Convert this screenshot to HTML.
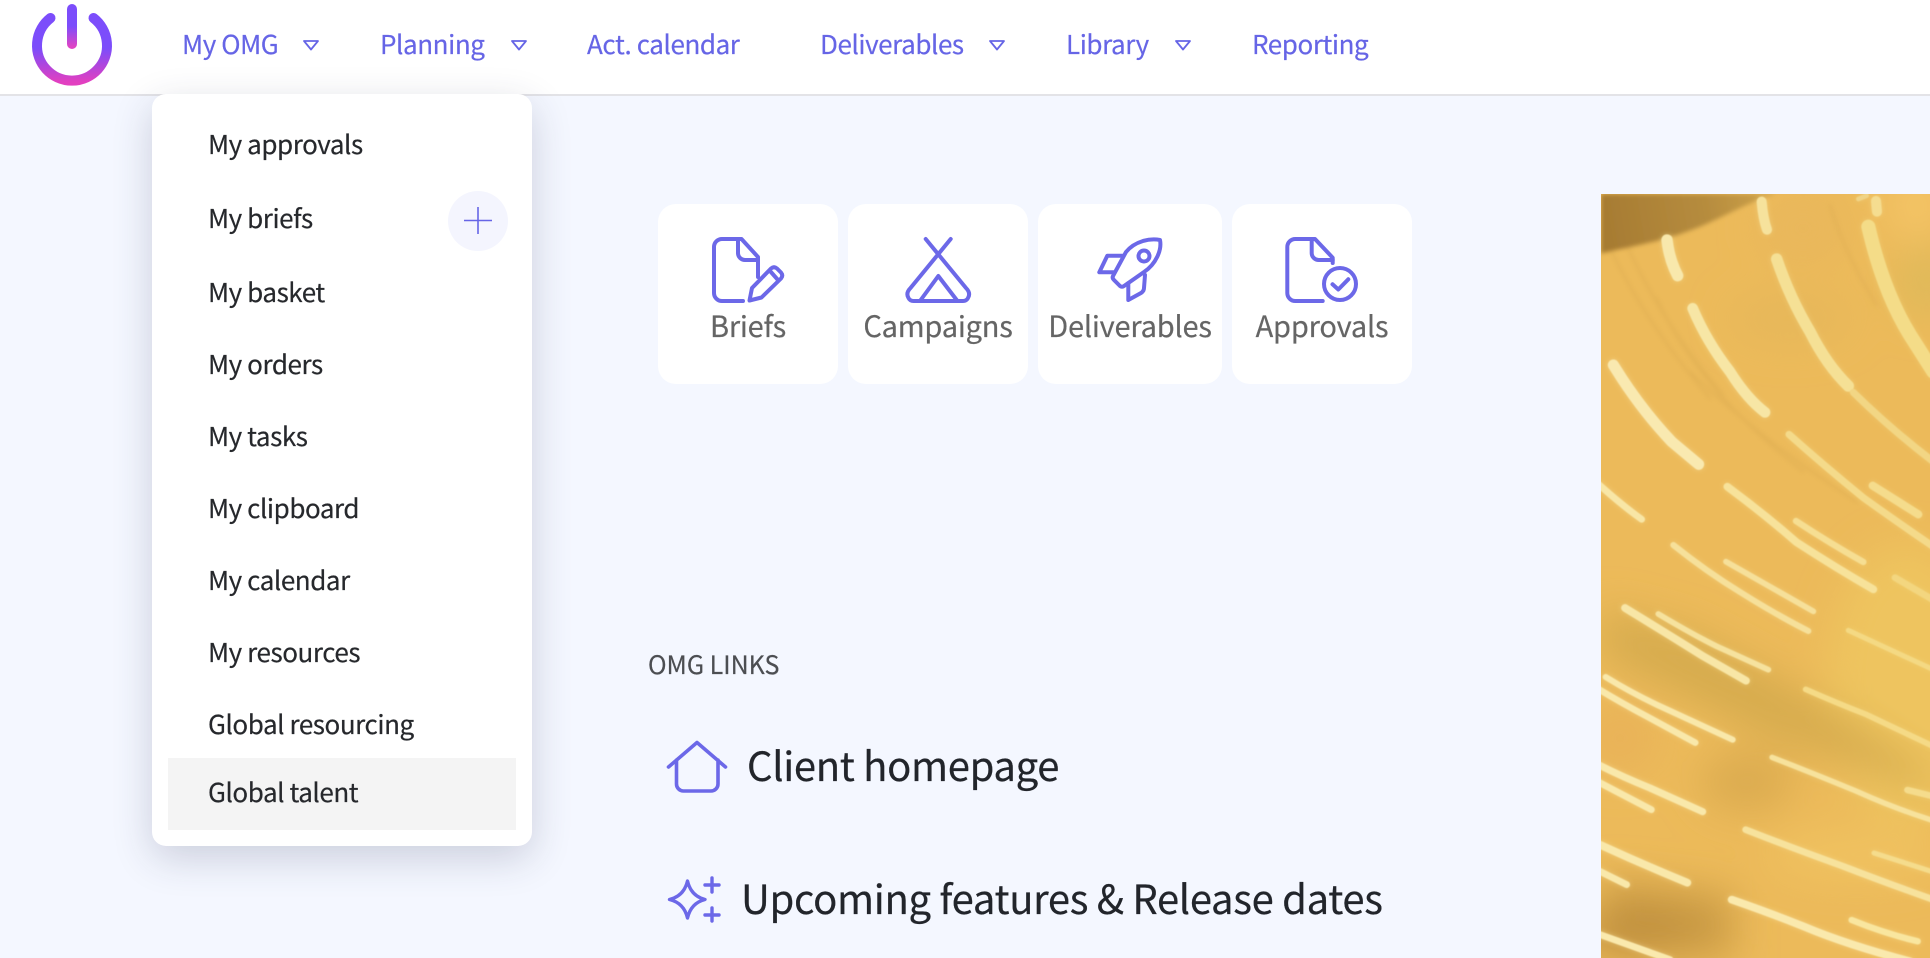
<!DOCTYPE html>
<html lang="en"><head><meta charset="utf-8"><title>OMG</title>
<style>
html,body{margin:0;padding:0;width:1930px;height:958px;overflow:hidden;background:#f4f7ff}
body{position:relative;font-family:"Noto Sans CJK JP","Noto Sans CJK SC","Liberation Sans",sans-serif}
.t{position:absolute;white-space:nowrap;line-height:40px;height:40px;-webkit-text-stroke:.2px currentColor}
.n{font-size:26px;letter-spacing:-.42px;color:#6665e6;top:24px}
.m{font-size:26px;letter-spacing:-.44px;color:#26282c;left:208px}
.c{font-size:29px;letter-spacing:-.2px;color:#656565;top:305px;text-align:center;transform:translateX(-50%)}
#hdr{position:absolute;left:0;top:0;width:1930px;height:94px;background:#fff;border-bottom:2px solid #e3e3e7}
#menu{position:absolute;left:152px;top:94px;width:380px;height:752px;background:#fff;border-radius:14px;box-shadow:0 12px 40px rgba(40,44,80,.2)}
#hl{position:absolute;left:168px;top:758px;width:348px;height:72px;background:#f4f4f4}
#plus{position:absolute;left:448px;top:191px;width:60px;height:60px;border-radius:50%;background:#f4f5fe}
.card{position:absolute;top:204px;height:180px;background:#fff;border-radius:18px}
svg{position:absolute;left:0;top:0}
#img{position:absolute;left:1601px;top:194px;width:329px;height:764px;overflow:hidden}
</style></head>
<body>
<div id="hdr"></div>

<div class="t n" style="left:182px">My OMG</div>
<div class="t n" style="left:380px">Planning</div>
<div class="t n" style="left:587px">Act. calendar</div>
<div class="t n" style="left:820px">Deliverables</div>
<div class="t n" style="left:1066px">Library</div>
<div class="t n" style="left:1252px">Reporting</div>

<div class="card" style="left:658px;width:180px"></div>
<div class="card" style="left:848px;width:180px"></div>
<div class="card" style="left:1038px;width:184px"></div>
<div class="card" style="left:1232px;width:180px"></div>
<div class="t c" style="left:748px">Briefs</div>
<div class="t c" style="left:938px">Campaigns</div>
<div class="t c" style="left:1130px">Deliverables</div>
<div class="t c" style="left:1322px">Approvals</div>

<div class="t" style="left:648px;top:644px;font-size:25px;color:#4c4e52">OMG LINKS</div>
<div class="t" style="left:747px;top:742px;font-size:40px;letter-spacing:-.33px;line-height:44px;height:44px;color:#22252b">Client homepage</div>
<div class="t" style="left:741px;top:875px;font-size:40px;letter-spacing:-.32px;line-height:44px;height:44px;color:#22252b">Upcoming features &amp; Release dates</div>

<div id="img">
<svg width="329" height="764" viewBox="33 27 987 2292" fill="none" stroke-linecap="round" stroke-linejoin="round">
<defs>
<linearGradient id="wedge" gradientUnits="userSpaceOnUse" x1="33" y1="120" x2="560" y2="30"><stop offset="0" stop-color="#a67b32"/><stop offset=".6" stop-color="#b68c3e"/><stop offset="1" stop-color="#cfa34a"/></linearGradient>
<filter id="b60" filterUnits="userSpaceOnUse" x="-300" y="-300" width="1700" height="3000"><feGaussianBlur stdDeviation="60"/></filter>
<filter id="b6" filterUnits="userSpaceOnUse" x="-100" y="-100" width="1300" height="2600"><feGaussianBlur stdDeviation="6"/></filter>
<filter id="st" filterUnits="userSpaceOnUse" x="-100" y="-100" width="1300" height="2600">
<feGaussianBlur in="SourceGraphic" stdDeviation="8" result="h"/>
<feComponentTransfer in="h" result="h2"><feFuncA type="linear" slope=".45"/></feComponentTransfer>
<feGaussianBlur in="SourceGraphic" stdDeviation="1.2" result="c"/>
<feMerge><feMergeNode in="h2"/><feMergeNode in="c"/></feMerge>
</filter>
</defs>
<rect x="33" y="27" width="987" height="2292" fill="#ecba5a"/>
<!-- tone blobs -->
<g filter="url(#b60)" stroke="none">
<ellipse cx="980" cy="60" rx="90" ry="110" fill="#f4c466"/>
<ellipse cx="1010" cy="290" rx="90" ry="110" fill="#dfb95a"/>
<ellipse cx="640" cy="130" rx="130" ry="110" fill="#e9b75c"/>
<ellipse cx="600" cy="400" rx="180" ry="70" fill="#e6b75a"/>
<ellipse cx="950" cy="1500" rx="240" ry="420" fill="#eec45e"/>
<path d="M33 1270 L300 1340 L760 1590 L1020 1760 L1020 1820 L500 1640 L33 1410Z" fill="#d6ab4e"/>
<ellipse cx="90" cy="1660" rx="110" ry="110" fill="#e9b258"/>
<ellipse cx="470" cy="1790" rx="140" ry="90" fill="#dbab50"/>
<ellipse cx="800" cy="2010" rx="260" ry="70" fill="#f0c260"/>
<path d="M33 2080 L430 2130 L430 2319 L33 2319Z" fill="#cb9b45"/>
<ellipse cx="130" cy="2240" rx="170" ry="60" fill="#bf8f3e"/>
</g>
<!-- fine dark motion lines -->
<g filter="url(#b6)" stroke="#c89a45" stroke-width="8" opacity=".22">
<path d="M60 190 Q170 420 360 640"/><path d="M110 180 Q220 420 400 630"/>
<path d="M200 340 Q330 620 640 860"/><path d="M300 560 Q520 770 800 950"/>
<path d="M720 60 Q760 200 860 360"/>
</g>
<!-- dark wedge -->
<path d="M33 27 H560 C470 50 380 110 290 140 C210 170 120 185 33 205Z" fill="url(#wedge)" filter="url(#b6)"/>
<!-- light streaks -->
<g stroke="#f7e4a0" filter="url(#st)">
<path stroke-width="30" stroke="#f6e29c" d="M515 50 Q519 100 531 134"/>
<path stroke-width="34" stroke="#f8e8ac" d="M231 165 Q238 225 263 272"/>
<path stroke-width="32" stroke="#f7e6a5" d="M308 370 Q350 470 420 560 Q470 640 525 682"/>
<path stroke-width="34" stroke="#f5e095" d="M560 222 Q600 340 660 440 Q710 540 775 603"/>
<path stroke-width="42" stroke="#f4dc88" d="M835 125 Q880 320 960 450 L1030 560"/>
<path stroke-width="33" stroke="#f9e9b0" d="M70 540 Q150 670 245 770 L326 838"/>
<path stroke-width="21" stroke="#f2d684" d="M790 622 Q900 730 1030 830"/>
<path stroke-width="21" stroke="#f4da8a" d="M597 748 Q700 840 820 938 Q920 1010 1030 1085"/>
<path stroke-width="24" stroke="#f5dc8c" d="M848 902 L985 988"/>
<path stroke-width="23" stroke="#f7e29a" d="M412 905 Q520 985 620 1072 Q740 1150 850 1213"/>
<path stroke-width="19" stroke="#f6de92" d="M618 1008 Q720 1075 820 1131"/>
<path stroke-width="20" stroke="#f8e6a6" d="M25 897 Q95 960 155 1003"/>
<path stroke-width="18" stroke="#f6e09a" d="M250 1080 Q350 1160 450 1221 Q560 1290 655 1338"/>
<path stroke-width="17" stroke="#f6e09a" d="M408 1130 Q540 1205 670 1279"/>
<path stroke-width="20" stroke="#f3d67f" d="M915 1178 L1030 1245"/>
<path stroke-width="14" stroke="#f0d486" d="M805 42 L830 32"/>
<path stroke-width="30" stroke="#f5dd90" d="M858 48 L861 80"/>
</g>
<g stroke="#f7e4a0" filter="url(#st)" transform="translate(0 1299)">
<path stroke-width="23" stroke="#f8e6a6" d="M105 -30 Q220 40 340 115 L468 188"/>
<path stroke-width="17" stroke="#f6e29e" d="M205 -12 Q300 45 380 85 L535 155"/>
<path stroke-width="15" stroke="#f4d983" d="M775 37 Q900 95 1030 155"/>
<path stroke-width="18" stroke="#f9e8aa" d="M47 177 Q120 222 200 260 L428 365"/>
<path stroke-width="19" stroke="#f9e8aa" d="M25 213 Q100 258 170 295 L316 374"/>
<path stroke-width="17" stroke="#f5da86" d="M647 214 Q740 255 830 290 L1030 385"/>
<path stroke-width="21" stroke="#f9e8aa" d="M25 440 Q100 478 180 510 L338 581"/>
<path stroke-width="20" stroke="#f9e8aa" d="M25 492 L184 575"/>
<path stroke-width="16" stroke="#f7e29c" d="M546 418 Q680 470 800 520 Q910 570 1030 608"/>
<path stroke-width="19" stroke="#f5dc8c" d="M952 516 L1030 535"/>
<path stroke-width="20" stroke="#f7e29c" d="M467 635 Q620 695 760 745 Q890 795 1030 845"/>
<path stroke-width="15" stroke="#f5dc8c" d="M852 705 L1030 762"/>
<path stroke-width="23" stroke="#f9e8aa" d="M25 678 Q160 740 292 794"/>
<path stroke-width="20" stroke="#f9e8aa" d="M25 758 L110 800"/>
<path stroke-width="23" stroke="#fae9ad" d="M425 845 Q540 885 640 925 Q770 980 960 1030"/>
<path stroke-width="19" stroke="#f9e69f" d="M785 906 Q880 945 983 970"/>
<path stroke-width="20" stroke="#fae9ad" d="M25 948 L240 1025"/>
</g>
</svg>
</div>

<div id="menu"></div>
<div id="hl"></div>
<div id="plus"></div>
<div class="t m" style="top:124px">My approvals</div>
<div class="t m" style="top:198px">My briefs</div>
<div class="t m" style="top:272px">My basket</div>
<div class="t m" style="top:344px">My orders</div>
<div class="t m" style="top:416px">My tasks</div>
<div class="t m" style="top:488px">My clipboard</div>
<div class="t m" style="top:560px">My calendar</div>
<div class="t m" style="top:632px">My resources</div>
<div class="t m" style="top:704px">Global resourcing</div>
<div class="t m" style="top:772px">Global talent</div>

<svg width="1930" height="958" viewBox="0 0 1930 958" fill="none" stroke-linecap="round" stroke-linejoin="round" style="pointer-events:none">
<defs>
<linearGradient id="lg" gradientUnits="userSpaceOnUse" x1="72" y1="48" x2="72" y2="82"><stop offset="0" stop-color="#7c4dfb"/><stop offset="1" stop-color="#e23fc0"/></linearGradient>
<linearGradient id="lb" gradientUnits="userSpaceOnUse" x1="72" y1="26" x2="72" y2="47"><stop offset="0" stop-color="#7c4dfb"/><stop offset="1" stop-color="#e044c4"/></linearGradient>
</defs>
<!-- logo -->
<path d="M50.500 18 A35 35 0 1 0 93.500 18" stroke="url(#lg)" stroke-width="10"/>
<path d="M72 9 V44" stroke="url(#lb)" stroke-width="10"/>
<!-- carets -->
<g stroke="#6665e6" stroke-width="1.800">
<path d="M304 41 H318 L311 49.500Z"/>
<path d="M512 41 H526 L519 49.500Z"/>
<path d="M990 41 H1004 L997 49.500Z"/>
<path d="M1176 41 H1190 L1183 49.500Z"/>
<path d="M464 220.500 H492 M478 207 V234" stroke-width="1.600" stroke-linecap="butt"/>
</g>
<g stroke="#6c68e8" stroke-width="4">
<!-- briefs -->
<path d="M743 301 H722 a8 8 0 0 1 -8 -8 V247 a8 8 0 0 1 8 -8 H741.500 L758 257 V277"/>
<path d="M738 239 V253 a7 7 0 0 0 7 7 H758"/>
<path d="M749.500 300.500 L752 288 L771 268.500 Q774 266 777 268.500 L781 272.500 Q783.500 275.500 781 278.500 L761.500 297.500Z"/>
<path d="M770.500 271.500 L778 280"/>
<!-- campaigns -->
<path d="M925.700 239 L966 288 Q971 293 968 298 Q966.500 301 963 301 H913.500 Q910 301 908.500 298 Q905.500 293 910.500 288 L950.700 239"/>
<path d="M920.700 300 L938.300 276 L956.700 300"/>
<!-- deliverables rocket -->
<path d="M1160 240 C1150 238 1135 241 1126 252 L1113 276 Q1112 278 1114 280 L1120 286 Q1122 287.500 1124 286 L1144 272 C1156 264 1162 250 1160 240Z"/>
<circle cx="1144" cy="256" r="5.500"/>
<path d="M1123.300 255.700 H1107.300 L1099.300 272.300 H1113.300"/>
<path d="M1128.300 283.300 V300 L1141 293 Q1144 291 1144 288 L1145 275"/>
<!-- approvals -->
<path d="M1322.700 301 H1295.300 a8 8 0 0 1 -8 -8 V247 a8 8 0 0 1 8 -8 H1315 L1332.700 257.700 V263"/>
<path d="M1311.700 239 V253 a7 7 0 0 0 7 7 H1332.700"/>
<circle cx="1340" cy="284" r="16"/>
<path d="M1332.500 284.300 L1338.300 289.500 L1348.300 279.300"/>
<!-- house -->
<path d="M668.500 767 L697 742.500 L725.500 767 M676.500 760 V784 a7 7 0 0 0 7 7 H711 a7 7 0 0 0 7 -7 V760" stroke-width="3.600"/>
<!-- sparkles -->
<path d="M687.500 881 Q691 896 705 899.500 Q691 903 687.500 918 Q684 903 669.500 899.500 Q684 896 687.500 881Z" stroke-width="3.400"/>
<path d="M712 878 V892 M705 885 H719 M712 908 V921 M705 915 H719" stroke-width="3.400"/>
</g>
</svg>
</body></html>
